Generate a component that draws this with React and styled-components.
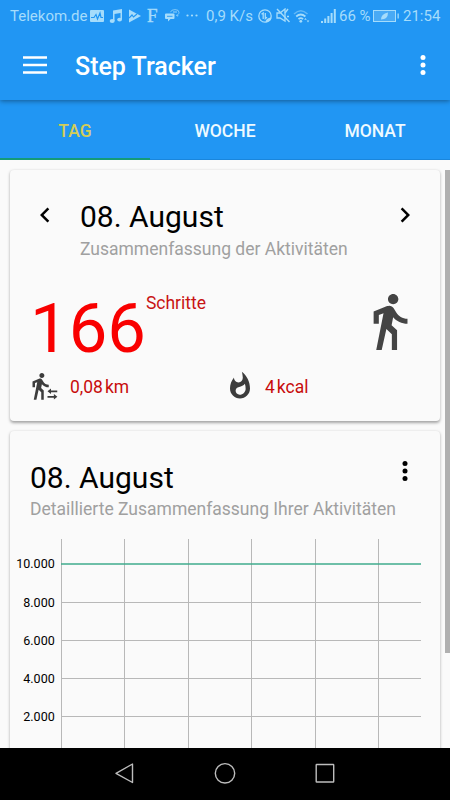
import React from "react"
import styled, { createGlobalStyle } from "styled-components"

const WALK =
  "M13.5 5.5c1.1 0 2-.9 2-2s-.9-2-2-2-2 .9-2 2 .9 2 2 2zM9.8 8.9L7 23h2.1l1.8-8 2.1 2v6h2v-7.5l-2.1-2 .6-3C14.8 12 16.8 13 19 13v-2c-1.9 0-3.5-1-4.3-2.4l-1-1.6c-.4-.6-1-1-1.7-1-.3 0-.5.1-.8.1L6 8.3V13h2V9.6l1.8-.7"
const FLAME =
  "M13.5.67s.74 2.65.74 4.8c0 2.06-1.35 3.73-3.41 3.73-2.07 0-3.63-1.67-3.63-3.73l.03-.36C5.21 7.51 4 10.62 4 14c0 4.42 3.58 8 8 8s8-3.58 8-8C20 8.61 17.41 3.8 13.5.67zM11.71 19c-1.78 0-3.22-1.4-3.22-3.14 0-1.62 1.05-2.76 2.81-3.12 1.77-.36 3.6-1.21 4.62-2.58.39 1.29.59 2.65.59 4.04 0 2.65-2.15 4.8-4.8 4.8z"

const columns = [51.5, 114.5, 178.5, 241.5, 305.5, 368.5]
const rows = [
  { label: "8.000", y: 63.5 },
  { label: "6.000", y: 101.5 },
  { label: "4.000", y: 139.5 },
  { label: "2.000", y: 177.5 },
]

const StatusBar = () => (
  <Status>
    <StatusText $w={77}>Telekom.de</StatusText>
    <StatusIcon $gap={3} width="14" height="12" viewBox="0 0 14 12">
      <rect width="14" height="12" rx="1" />
      <path d="M1 7.5h3l2-3 1.5 4.5 2.5-6 1 4.5h2" fill="none" stroke="#2196f3" strokeWidth="1.2" />
    </StatusIcon>
    <StatusIcon $gap={5} width="14" height="14" viewBox="0 0 14 14">
      <path d="M4 1.5L13 0v10.5h-1.5V4L5.500 5v7H4z" />
      <ellipse cx="3.2" cy="12" rx="2.5" ry="1.9" />
      <ellipse cx="10.6" cy="10.6" rx="2.4" ry="1.9" />
    </StatusIcon>
    <StatusIcon $gap={6} width="12" height="14" viewBox="0 0 12 14">
      <path d="M0 .5L12 7 0 13.5z" />
      <path d="M0 9l3-3 1.5 2L8 5" fill="none" stroke="#2196f3" strokeWidth="1.2" />
    </StatusIcon>
    <Letter>F</Letter>
    <StatusIcon $gap={5} width="15" height="13" viewBox="0 0 15 13">
      <path d="M1 4.5h7.500q1 0 1 1v3.500q0 1-1 1H5.500L3 12.500V10H1q-1 0-1-1V5.500q0-1 1-1z" />
      <path d="M5.500 3.200Q6 .6 10 .6q4 0 4 2.700 0 1.500-1.200 2.200v1.700L11 6" fill="none" stroke="#a5dcfb" strokeOpacity=".8" strokeWidth=".9" />
      <path d="M2 7.300h5.500" fill="none" stroke="#2196f3" strokeWidth=".9" />
      <path d="M8 3h4" fill="none" stroke="#a5dcfb" strokeWidth=".9" />
    </StatusIcon>
    <StatusIcon $gap={6} width="12" height="3" viewBox="0 0 12 3">
      <circle cx="1.5" cy="1.5" r="1.1" />
      <circle cx="6" cy="1.5" r="1.1" />
      <circle cx="10.5" cy="1.5" r="1.1" />
    </StatusIcon>
    <StatusText $gap={8} $w={47}>0,9 K/s</StatusText>
    <StatusIcon $gap={5} width="14" height="14" viewBox="0 0 14 14">
      <circle cx="7" cy="7" r="6.2" fill="none" stroke="#a5dcfb" strokeWidth="1.3" />
      <path d="M3.500 5.300L5.200 4v6M7.300 4v5.600l1.700-1.300" fill="none" stroke="#a5dcfb" strokeWidth="1.3" />
      <path d="M7.500 13.500q0-4.500 6-5-.5 4.500-6 5z" />
    </StatusIcon>
    <StatusIcon $gap={4} width="15" height="15" viewBox="0 0 15 15">
      <path d="M1 5h3l5-4v12L4 10H1z" fill="none" stroke="#a5dcfb" strokeWidth="1.3" />
      <path d="M1 1l12.500 13M12 1L9 5M11 8.500h2" fill="none" stroke="#a5dcfb" strokeWidth="1.4" />
    </StatusIcon>
    <StatusIcon $gap={2} width="17" height="14" viewBox="0 0 17 14">
      <path d="M1 5q6.800-6.500 13.500 0" fill="none" stroke="#a5dcfb" strokeOpacity=".5" strokeWidth="1.5" />
      <path d="M3.200 7.500q4.600-4 9.200 0M5.500 10.200q2.300-2 4.600 0" fill="none" stroke="#a5dcfb" strokeWidth="1.7" />
      <circle cx="7.800" cy="12.300" r="1.4" />
      <path d="M12.500 9l1.300 1.700h-2.600zM15 13.500l1.300-2h-2.600z" />
    </StatusIcon>
    <StatusIcon $gap={11} width="16" height="14" viewBox="0 0 16 14">
      <path d="M0 12h2v2H0zM3.200 9.500h2V14h-2zM6.400 7h2v7h-2zM9.600 4h2v10h-2zM12.800 0h2v14h-2z" />
    </StatusIcon>
    <StatusText $gap={2} $w={32}>66 %</StatusText>
    <StatusIcon $gap={2} width="27" height="12" viewBox="0 0 27 12">
      <rect x=".5" y=".5" width="22" height="11" fill="#a5dcfb" fillOpacity=".3" stroke="#a5dcfb" />
      <path d="M24.500 3.500h1.300v5h-1.300zM8 9.500q0-5.500 7-7 0 7-7 7z" />
    </StatusIcon>
    <StatusText $gap={3} $w={38}>21:54</StatusText>
  </Status>
)

const MoreIcon = () => (
  <Icon width="30" height="30" viewBox="0 0 30 30">
    <circle cx="15" cy="7.5" r="2.5" />
    <circle cx="15" cy="15" r="2.5" />
    <circle cx="15" cy="22.5" r="2.5" />
  </Icon>
)

const Chart = () => (
  <ChartSvg width="430" height="240" viewBox="0 0 430 240">
    {columns.map((x) => (
      <line key={x} x1={x} x2={x} y1="0" y2="240" stroke="#b8b8b8" />
    ))}
    {rows.map(({ label, y }) => (
      <g key={label}>
        <line x1="51" x2="411" y1={y} y2={y} stroke="#b8b8b8" />
        <text x="44.7" y={y + 4}>{label}</text>
      </g>
    ))}
    <line x1="51" x2="411" y1="25" y2="25" stroke="#3fab8c" strokeWidth="1.4" />
    <text x="44.7" y="29.3">10.000</text>
  </ChartSvg>
)

const App = () => {
  return (
    <Screen>
      <GlobalStyle />
      <Header>
        <StatusBar />
        <Toolbar>
          <Icon width="30" height="30" viewBox="0 0 30 30">
            <path d="M3 6.300h24v2.500H3zM3 13.700h24v2.500H3zM3 21.200h24v2.500H3z" />
          </Icon>
          <Title>Step Tracker</Title>
          <MoreIcon />
        </Toolbar>
      </Header>
      <Tabs>
        <Tab $active>TAG</Tab>
        <Tab>WOCHE</Tab>
        <Tab>MONAT</Tab>
      </Tabs>
      <Content>
        <Cards>
          <SummaryCard>
            <DateRow>
              <Icon width="30" height="30" viewBox="0 0 24 24">
                <path d="M15.41 7.41L14 6l-6 6 6 6 1.41-1.41L10.83 12z" />
              </Icon>
              <Heading>
                <Date>08. August</Date>
                <Subtitle $gap={5}>Zusammenfassung der Aktivitäten</Subtitle>
              </Heading>
              <Icon width="30" height="30" viewBox="0 0 24 24">
                <path d="M10 6L8.59 7.41 13.17 12l-4.58 4.59L10 18l6-6z" />
              </Icon>
            </DateRow>
            <StepsRow>
              <Steps>166</Steps>
              <Unit>Schritte</Unit>
              <WalkIcon width="62.5" height="62.5" viewBox="0 0 24 24">
                <path d={WALK} />
              </WalkIcon>
            </StepsRow>
            <StatsRow>
              <Stat $w={200}>
                <StatIcon width="35" height="30" viewBox="0 0 28 24">
                  <path d={WALK} />
                  <path d="M18 16.200l2.800-2.200v1.500h5v1.500h-5v1.400zM25.900 20.600l-2.800-2.200v1.500H18v1.500h5.100v1.400z" />
                </StatIcon>
                <Value>0,08</Value>
                <Value>km</Value>
              </Stat>
              <Stat $w={200}>
                <StatIcon width="30" height="30" viewBox="0 0 24 24">
                  <path d={FLAME} />
                </StatIcon>
                <Value>4</Value>
                <Value>kcal</Value>
              </Stat>
            </StatsRow>
          </SummaryCard>
          <DetailCard>
            <DetailHead>
              <Heading>
                <Date>08. August</Date>
                <Subtitle $gap={4}>Detaillierte Zusammenfassung Ihrer Aktivitäten</Subtitle>
              </Heading>
              <MoreIcon />
            </DetailHead>
            <Chart />
          </DetailCard>
        </Cards>
        <Scrollbar />
      </Content>
      <NavBar>
        <NavIcon viewBox="0 0 24 24">
          <path d="M19.500 3v18.500L3 12.300z" />
        </NavIcon>
        <NavIcon viewBox="0 0 24 24">
          <circle cx="12" cy="12.300" r="9.700" />
        </NavIcon>
        <NavIcon viewBox="0 0 24 24">
          <rect x="3.200" y="3.500" width="17.500" height="17.500" rx=".5" />
        </NavIcon>
      </NavBar>
    </Screen>
  )
}

export default App

//~~~~~~~~~~~~~~~~~~~
// Styled-Components
//~~~~~~~~~~~~~~~~~~~

const GlobalStyle = createGlobalStyle`
  body {
    margin: 0;
    background: #fafafa;
    font-family: Roboto, sans-serif;
  }
  * {
    box-sizing: border-box;
  }
`

const Screen = styled.div`
  display: flex;
  flex-direction: column;
  width: 450px;
  height: 800px;
  overflow: hidden;
`

const Header = styled.header`
  position: relative;
  z-index: 1;
  flex: none;
  height: 100px;
  background: #2196f3;
  box-shadow: 0 1px 5px rgba(0, 0, 0, 0.42);
`

const Status = styled.div`
  display: flex;
  align-items: center;
  height: 30px;
  padding: 1px 0 0 10px;
  color: #a5dcfb;
`

const StatusText = styled.span`
  flex: none;
  width: ${(props) => props.$w}px;
  margin-left: ${(props) => props.$gap || 0}px;
  padding-top: 1px;
  font-size: 15px;
  white-space: nowrap;
`

const StatusIcon = styled.svg`
  flex: none;
  margin-left: ${(props) => props.$gap}px;
  fill: currentColor;
`

const Letter = styled.span`
  flex: none;
  width: 13px;
  margin-left: 6px;
  font: 19px "Liberation Serif", serif;
  -webkit-text-stroke: 0.4px;
`

const Toolbar = styled.div`
  display: flex;
  align-items: center;
  height: 70px;
  padding: 0 12px 0 20px;
  color: #fff;
`

const Title = styled.h1`
  flex: 1;
  margin: 2px 0 0 25px;
  font-size: 25px;
  font-weight: 500;
`

const Icon = styled.svg`
  flex: none;
  fill: currentColor;
`

const Tabs = styled.nav`
  display: flex;
  flex: none;
  height: 60px;
  background: #2196f3;
`

const Tab = styled.div`
  display: flex;
  flex: 1;
  align-items: center;
  justify-content: center;
  padding-top: 3px;
  border-bottom: ${(props) => (props.$active ? "2px solid #149b78" : "1px solid #1a86dc")};
  color: ${(props) => (props.$active ? "#d3cd58" : "#eefaff")};
  font-size: 17.5px;
  font-weight: 500;
`

const Content = styled.main`
  display: flex;
  flex: 1;
  min-height: 0;
  padding: 10px 0 0 10px;
  overflow: hidden;
`

const Cards = styled.div`
  display: flex;
  flex-direction: column;
  gap: 10px;
  width: 430px;
  margin-right: 5px;
`

const Card = styled.section`
  flex: none;
  border-radius: 4px;
  background: #fafafa;
  box-shadow: 0 1.5px 3px rgba(0, 0, 0, 0.34);
`

const SummaryCard = styled(Card)`
  height: 251px;
`

const DetailCard = styled(Card)`
  height: 400px;
`

const DateRow = styled.div`
  display: flex;
  height: 108px;
  padding: 29px 20px 0;

  > svg {
    margin-top: 1px;
  }
`

const Heading = styled.div`
  flex: 1;
  min-width: 0;
  white-space: nowrap;

  ${DateRow} & {
    padding-left: 20px;
  }
`

const Date = styled.h2`
  margin: 0;
  color: #000;
  font-size: 30px;
  font-weight: 400;
  line-height: 35px;
`

const Subtitle = styled.p`
  margin: ${(props) => props.$gap}px 0 0;
  color: #a0a0a0;
  font-size: 17.5px;
  line-height: 21px;
`

const StepsRow = styled.div`
  display: flex;
  align-items: flex-start;
  height: 62px;
  padding: 13px 20px 0;
`

const Steps = styled.div`
  color: #f90000;
  font-size: 68.75px;
  line-height: 75px;
`

const Unit = styled.div`
  flex: 1;
  padding-top: 2px;
  color: #c81414;
  font-size: 17.5px;
  line-height: 21px;
`

const WalkIcon = styled(Icon)`
  margin-top: -0.6px;
  color: #444;
`

const StatsRow = styled.div`
  display: flex;
  padding: 31px 15px 0;
`

const Stat = styled.div`
  display: flex;
  align-items: center;
  gap: 2px;
  width: ${(props) => props.$w}px;
  height: 30px;
`

const Value = styled.span`
  padding-top: 2px;
  color: #c80c0c;
  font-size: 17.5px;
  line-height: 21px;
`

const StatIcon = styled(Icon)`
  margin-right: 8px;
  color: #3c3c3c;
`

const DetailHead = styled.div`
  display: flex;
  height: 89px;
  padding: 29px 20px 0;

  > svg {
    margin-top: -4px;
  }
`

const ChartSvg = styled.svg`
  display: block;
  margin-top: 19px;
  font-size: 12.5px;
  text-anchor: end;
`

const Scrollbar = styled.div`
  width: 5px;
  height: 483px;
  background: #b0b0b0;
`

const NavBar = styled.footer`
  display: flex;
  flex: none;
  align-items: center;
  justify-content: center;
  gap: 76px;
  height: 52.5px;
  padding-bottom: 1px;
  background: #000;
`

const NavIcon = styled.svg`
  width: 24px;
  height: 24px;
  fill: none;
  stroke: #bdbdbd;
  stroke-width: 1.4;
  stroke-linejoin: round;
`
